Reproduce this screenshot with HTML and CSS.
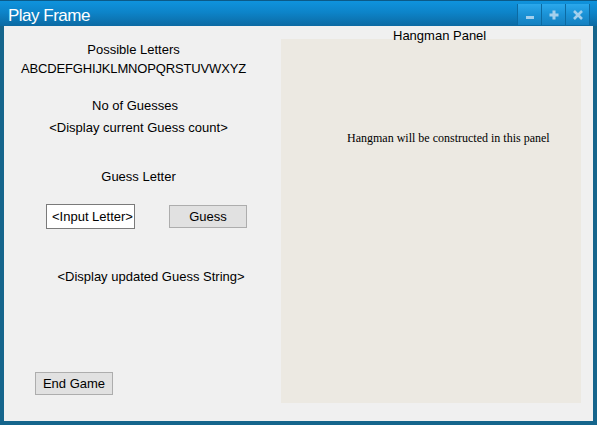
FILE: index.html
```html
<!DOCTYPE html>
<html lang="en">
<head>
<meta charset="utf-8">
<title>Play Frame</title>
<link rel="stylesheet" href="styles.css">
</head>
<body>
<div class="window">
  <div class="titlebar">
    <span class="title">Play Frame</span>
    <div class="controls">
      <div class="ctl">
        <svg width="10" height="10" viewBox="0 0 10 10"><rect x="1" y="6" width="8" height="3" fill="#a3cfec"/></svg>
      </div>
      <div class="ctl">
        <svg width="10" height="10" viewBox="0 0 10 10"><rect x="3.5" y="0.5" width="3" height="9" fill="#a3cfec"/><rect x="0.5" y="3.5" width="9" height="3" fill="#a3cfec"/></svg>
      </div>
      <div class="ctl">
        <svg width="10" height="10" viewBox="0 0 10 10"><path d="M1 1 L9 9 M9 1 L1 9" stroke="#a3cfec" stroke-width="2.6"/></svg>
      </div>
    </div>
  </div>
  <div class="content">
    <div class="left">
      <div class="line possible">Possible Letters</div>
      <div class="line alphabet">ABCDEFGHIJKLMNOPQRSTUVWXYZ</div>
      <div class="line guesses">No of Guesses</div>
      <div class="line count">&lt;Display current Guess count&gt;</div>
      <div class="line guess-label">Guess Letter</div>
      <div class="input-row">
        <input class="textbox" type="text" value="<Input Letter>">
        <button class="btn guess-btn">Guess</button>
      </div>
      <div class="line updated">&lt;Display updated Guess String&gt;</div>
      <button class="btn end-btn">End Game</button>
    </div>
    <div class="right">
      <div class="panel-label">Hangman Panel</div>
      <div class="panel">
        <p class="panel-text">Hangman will be constructed in this panel</p>
      </div>
    </div>
  </div>
</div>
</body>
</html>
```

FILE: styles.css
```css
html, body {
  margin: 0;
  padding: 0;
  background: #ffffff;
}

body {
  font-family: "Liberation Sans", Arial, sans-serif;
  font-size: 13px;
  color: #000;
}

.window {
  width: 597px;
  height: 425px;
}

.titlebar {
  height: 26px;
  box-sizing: border-box;
  border-top: 1px solid #0b5a88;
  background: linear-gradient(to bottom, #0f93dd 0%, #0d84c9 45%, #0c6aa3 100%);
  display: flex;
  align-items: flex-start;
}

.title {
  color: #ffffff;
  font-size: 17px;
  letter-spacing: -0.5px;
  line-height: 20px;
  padding-top: 5px;
  padding-left: 8px;
}

.controls {
  margin-left: auto;
  margin-right: 7px;
  margin-top: 3px;
  display: flex;
  height: 21px;
}

.ctl {
  width: 23px;
  height: 21px;
  border-left: 1px solid #0c6aa2;
  background: linear-gradient(to bottom, #2ba8ec 0%, #1a92d6 50%, #1680c0 100%);
  display: flex;
  align-items: center;
  justify-content: center;
}

.ctl:last-child {
  border-right: 1px solid #0c6aa2;
}

.content {
  box-sizing: border-box;
  height: 399px;
  border: 4px solid #15658c;
  border-top: 0;
  background: #f0f0f0;
  display: flex;
}

.left {
  width: 277px;
  box-sizing: border-box;
  padding-top: 16px;
  padding-right: 18px;
  display: flex;
  flex-direction: column;
  align-items: stretch;
}

.line {
  line-height: 15px;
  height: 15px;
  text-align: center;
  white-space: nowrap;
}

.alphabet { margin-top: 4px; letter-spacing: -0.15px; }
.guesses { margin-top: 22px; padding-left: 3px; }
.count { margin-top: 7px; padding-left: 10px; }
.guess-label { margin-top: 34px; padding-left: 10px; }

.input-row {
  margin-top: 20px;
  padding-left: 42px;
  display: flex;
  align-items: center;
  gap: 34px;
  height: 25px;
}

.textbox {
  box-sizing: border-box;
  width: 89px;
  height: 25px;
  margin: 0;
  padding: 0 0 0 5px;
  border: 1px solid #7a7a7a;
  background: #ffffff;
  font-family: "Liberation Sans", Arial, sans-serif;
  font-size: 13px;
  color: #000;
  outline: none;
}

.btn {
  box-sizing: border-box;
  width: 78px;
  height: 23px;
  margin: 0;
  padding: 0;
  border: 1px solid #adadad;
  background: #e1e1e1;
  font-family: "Liberation Sans", Arial, sans-serif;
  font-size: 13px;
  color: #000;
  line-height: 21px;
}

.updated { margin-top: 40px; padding-left: 35px; }

.end-btn {
  margin-top: 88px;
  margin-left: 31px;
  align-self: flex-start;
}

.right {
  width: 300px;
  display: block;
}

.panel-label {
  margin-top: 2px;
  line-height: 15px;
  height: 15px;
  padding-left: 112px;
  margin-bottom: -4px;
  white-space: nowrap;
}

.panel {
  width: 300px;
  height: 364px;
  background: #ece9e2;
  box-sizing: border-box;
  padding-top: 92px;
  padding-left: 66px;
}

.panel-text {
  margin: 0;
  font-family: "Liberation Serif", "Times New Roman", serif;
  font-size: 12px;
  line-height: 14px;
  white-space: nowrap;
}
```
